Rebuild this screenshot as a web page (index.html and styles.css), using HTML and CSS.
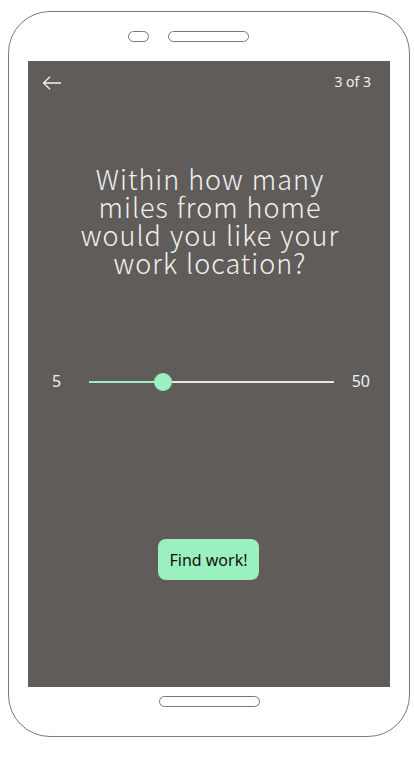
FILE: index.html
```html
<!DOCTYPE html>
<html>
<head>
<meta charset="utf-8">
<link rel="stylesheet" href="styles.css">
</head>
<body>
<div class="phone">
  <div class="top">
    <span class="cam"></span>
    <span class="speaker"></span>
  </div>
  <div class="screen">
    <div class="header">
      <svg class="back" width="20" height="14" viewBox="0 0 20 14">
        <path d="M19 7H1.5M8 0.8L1.5 7L8 13.2" fill="none" stroke="#f2f2f2" stroke-width="1.3"/>
      </svg>
      <span class="step">3 of 3</span>
    </div>
    <h1 class="question">Within how many miles from home would you like your work location?</h1>
    <div class="slider">
      <span class="min">5</span>
      <div class="track">
        <div class="fill" style="width:30.5%"></div>
        <div class="knob" style="left:30.5%"></div>
      </div>
      <span class="max">50</span>
    </div>
    <div class="action">
      <button class="btn">Find work!</button>
    </div>
  </div>
  <div class="bottom">
    <span class="home"></span>
  </div>
</div>
</body>
</html>
```
FILE: styles.css
```css
* { box-sizing: border-box; }
html, body { margin: 0; padding: 0; background: #fff; }
body { font-family: "Noto Sans", "Open Sans", sans-serif; }
.phone {
  margin: 11px 0 0 8px;
  width: 402px;
  height: 726px;
  border: 1px solid #7a7a7a;
  border-radius: 42px;
  display: flex;
  flex-direction: column;
  align-items: center;
}
.top {
  align-self: stretch;
  height: 49px;
  display: flex;
  align-items: center;
  justify-content: flex-start;
  gap: 19px;
  padding-left: 119px;
}
.cam, .speaker, .home {
  display: block;
  height: 11px;
  border: 1px solid #777;
  border-radius: 6px;
}
.cam { width: 21px; }
.speaker { width: 81px; }
.screen {
  width: 362px;
  height: 626px;
  background: #605c5a;
  color: #f0f0f0;
  display: flex;
  flex-direction: column;
}
.header {
  display: flex;
  justify-content: space-between;
  align-items: flex-start;
  padding: 12px 19px 0 14px;
  height: 40px;
}
.back { margin-top: 3px; }
.step { font-size: 14px; line-height: 16px; margin-top: 1px; }
.question {
  margin: 64px auto 0;
  width: 300px;
  padding-left: 2px;
  text-align: center;
  font-family: "Noto Sans CJK KR", "Noto Sans", sans-serif;
  font-weight: 300;
  font-size: 27px;
  letter-spacing: 1px;
  word-spacing: 1px;
  line-height: 28px;
}
.slider {
  margin-top: 94px;
  display: flex;
  align-items: center;
  height: 20px;
  padding: 0 20px 0 24px;
}
.min, .max { font-size: 16px; line-height: 20px; }
.min { width: 37px; }
.max { margin-left: 18px; }
.track {
  position: relative;
  flex: 0 0 245px;
  height: 2px;
  background: #e6e6e6;
  margin-top: 1px;
}
.fill { height: 2px; background: #9bf0c0; }
.knob {
  position: absolute;
  top: -8px;
  width: 18px;
  height: 18px;
  margin-left: -9px;
  border-radius: 50%;
  background: #9bf0c0;
}
.action {
  margin-top: 148px;
  display: flex;
  justify-content: center;
  padding-right: 1px;
}
.btn {
  width: 101px;
  height: 41px;
  border: none;
  border-radius: 8px;
  background: #9bf0c0;
  color: #111;
  font-family: "Noto Sans", sans-serif;
  font-size: 16px;
  padding: 0;
}
.bottom {
  flex: 1;
  display: flex;
  align-items: center;
  justify-content: center;
  padding-bottom: 20px;
}
.home { width: 101px; }
```
